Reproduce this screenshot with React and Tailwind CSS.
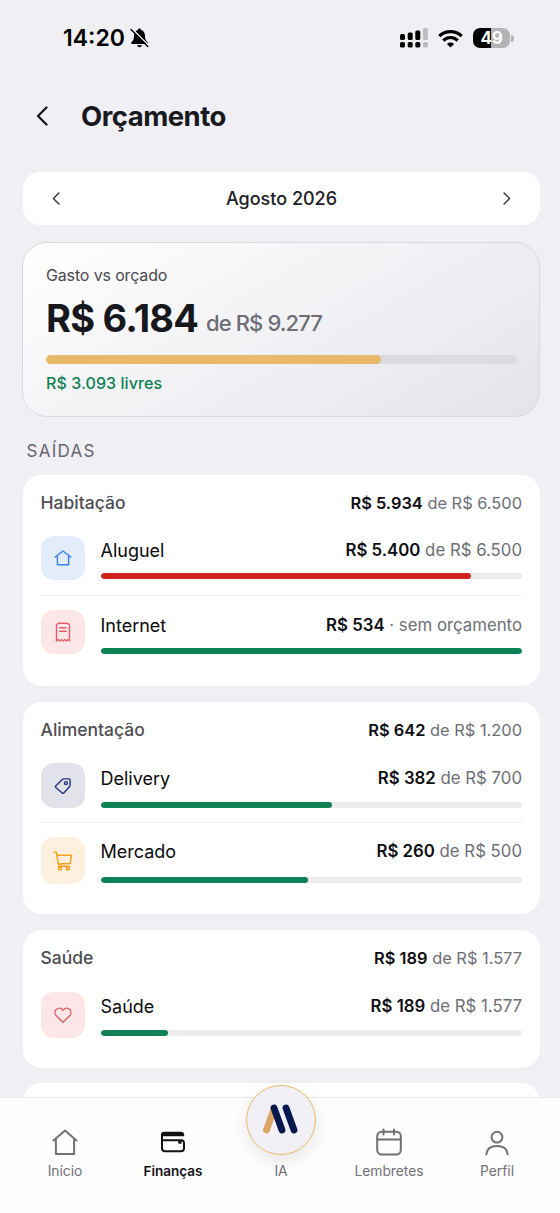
const INTER = "font-['Inter',sans-serif]";

const strokeProps = {
  fill: 'none',
  stroke: 'currentColor',
  strokeLinecap: 'round',
  strokeLinejoin: 'round',
};

function Chevron({ className, left, width = 2 }) {
  return (
    <svg viewBox="0 0 12 20" className={className} {...strokeProps} strokeWidth={width}>
      <path d={left ? 'M10.5 1.5 2 10l8.5 8.5' : 'M1.5 1.5 10 10l-8.5 8.5'} />
    </svg>
  );
}

function StatusBar() {
  return (
    <header className="flex h-[76px] shrink-0 items-center justify-between pl-[63px] pr-[46px]">
      <div className="flex items-center gap-[5px]">
        <span className="text-[23px] leading-7 font-semibold text-black">14:20</span>
        <svg viewBox="0 0 19 20" className="h-5 w-[19px]">
          <path d="M9.5 0.6c-.9 0-1.4.6-1.6 1.3C5.3 2.700 4 5 4 8c0 3.500-1.200 5-2.700 6.500-.6.700-.2 1.500.7 1.500h15c.9 0 1.300-.8.700-1.500C16.200 13 15 11.500 15 8c0-3-1.300-5.300-3.900-6.100C10.900 1.200 10.400.6 9.500.6z" fill="#000" />
          <path d="M7 17.300h5c-.3 1.200-1.300 1.900-2.500 1.900S7.300 18.500 7 17.300z" fill="#000" />
          <path d="M2.100.8 18.500 17.300" stroke="#f0eff4" strokeWidth="1.600" />
          <path d="M1 1.500 17.800 18.500" stroke="#000" strokeWidth="1.400" strokeLinecap="round" />
        </svg>
      </div>
      <div className="flex items-center">
        <svg viewBox="0 0 28 20" className="h-5 w-7">
          <g fill="#000">
            <rect x="0" y="6" width="5" height="6" rx="1.600" />
            <rect x="7.700" y="4.500" width="5" height="7.500" rx="1.600" />
            <rect x="15.300" y="2.500" width="5" height="9.500" rx="1.600" />
            <rect x="0" y="14" width="5" height="5.600" rx="1.600" />
            <rect x="7.700" y="14" width="5" height="5.600" rx="1.600" />
            <rect x="15.300" y="14" width="5" height="5.600" rx="1.600" />
          </g>
          <g fill="#bcbcc0">
            <rect x="22.900" y="0" width="5" height="12" rx="1.600" />
            <rect x="22.900" y="14" width="5" height="5.600" rx="1.600" />
          </g>
        </svg>
        <svg viewBox="0 0 25 19" className="ml-[10px] h-[19px] w-[25px]" fill="none" stroke="#000" strokeWidth="3.200">
          <path d="M1.300 7.200a16 16 0 0 1 22.400 0" />
          <path d="M5.300 11.500a10.200 10.200 0 0 1 14.400 0" />
          <path d="M12.500 18.400 8.900 15a5.200 5.200 0 0 1 7.200 0z" fill="#000" stroke="none" />
        </svg>
        <div className="ml-[10px] flex h-5 w-[37px] items-center justify-center rounded-[7px] bg-[linear-gradient(90deg,#000_49%,#b4b4b6_49%)]">
          <span className="text-[17px] leading-5 font-bold tracking-[-0.3px] text-white">49</span>
        </div>
        <div className="ml-[1px] h-[7px] w-[3px] rounded-r-[3px] bg-[#b4b4b6]" />
      </div>
    </header>
  );
}

const categoryIcons = {
  home: (
    <svg viewBox="0 0 18 18" className="size-[18px]" {...strokeProps} strokeWidth="1.450">
      <path d="M1.200 8 9 2l7.800 6M3.400 6.600V15.800h11.200V6.600" />
    </svg>
  ),
  receipt: (
    <svg viewBox="0 0 18 20" className="h-5 w-[18px]" {...strokeProps} strokeWidth="1.400">
      <path d="M2.500 18.900V4A2.800 2.800 0 0 1 5.300 1.200h7.400A2.800 2.800 0 0 1 15.500 4v14.900l-1.600-1.500-1.600 1.500-1.650-1.500L9 18.900l-1.650-1.500-1.650 1.500-1.600-1.500z" />
      <path d="M5.700 5.800h6.600M5.700 9.200h6.600" />
    </svg>
  ),
  tag: (
    <svg viewBox="0 0 18 18" className="size-[18px]" {...strokeProps} strokeWidth="1.400">
      <path d="M1.500 9.300 8.300 2.600q.7-.7 1.600-.7h5.200q1 0 1 1v5.200q0 .9-.7 1.600L9.800 16q-.8.700-1.600 0L1.500 10.200q-.4-.5 0-.9z" />
      <circle cx="12" cy="6.100" r="1.500" />
    </svg>
  ),
  cart: (
    <svg viewBox="0 0 20 20" className="size-5" {...strokeProps} strokeWidth="1.500">
      <path d="M1 1.300h2.400l2.400 14h10.400M4 4.300h14.600l-1.500 8.200-11.600.6" />
      <circle cx="7" cy="17.500" r="1.600" />
      <circle cx="14.800" cy="17.500" r="1.600" />
    </svg>
  ),
  heart: (
    <svg viewBox="0 0 18 18" className="size-[18px]" {...strokeProps} strokeWidth="1.400">
      <path d="M9 16.200 2.500 9.900C.7 8.100.6 5.200 2.200 3.500 4 1.600 7.300 1.600 9 4.300c1.700-2.700 5-2.700 6.800-.8 1.600 1.700 1.500 4.600-.3 6.400z" />
    </svg>
  ),
};

function Amount({ spent, rest, className }) {
  return (
    <span className={`${className} whitespace-nowrap text-[#6e6e75]`}>
      <span className="font-semibold text-[#0d0d12]">{spent}</span> {rest}
    </span>
  );
}

function Item({ item }) {
  return (
    <div className={`flex ${item.box}`}>
      <div className={`flex w-[44px] shrink-0 items-center justify-center rounded-[13px] ${item.tile}`}>
        {categoryIcons[item.icon]}
      </div>
      <div className="ml-[16px] flex min-w-0 flex-1 flex-col">
        <div className={`flex h-6 items-start justify-between ${item.line}`}>
          <span className="text-[18px] leading-6 text-[#0a0a0c]">{item.name}</span>
          <Amount spent={item.spent} rest={item.rest} className="-mt-px text-[16.800px] leading-6" />
        </div>
        <div className="h-[6px] w-full overflow-hidden rounded-full bg-[#ececed]">
          <div className={`h-full rounded-full ${item.bar}`} style={{ width: `${item.percent}%` }} />
        </div>
      </div>
    </div>
  );
}

const groups = [
  {
    name: 'Habitação', spent: 'R$ 5.934', rest: 'de R$ 6.500', height: 'h-[211px]', head: 'h-[61px] pt-[16px]',
    items: [
      { name: 'Aluguel', spent: 'R$ 5.400', rest: 'de R$ 6.500', icon: 'home', percent: 87.9, bar: 'bg-[#d0231c]', tile: 'h-[44px] bg-[#e2ecfb] text-[#3b82e8]', box: 'h-[59px]', line: 'mt-[3px] mb-[10px]' },
      { name: 'Internet', spent: 'R$ 534', rest: '· sem orçamento', icon: 'receipt', percent: 100, bar: 'bg-[#0a8255]', tile: 'h-[44px] bg-[#fde6e7] text-[#e5606b]', box: 'h-[60px] mt-[14px]', line: 'mt-[4px] mb-[10px]' },
    ],
  },
  {
    name: 'Alimentação', spent: 'R$ 642', rest: 'de R$ 1.200', height: 'h-[212px]', head: 'h-[61px] pt-[16px]',
    items: [
      { name: 'Delivery', spent: 'R$ 382', rest: 'de R$ 700', icon: 'tag', percent: 55, bar: 'bg-[#0f8256]', tile: 'h-[45px] bg-[#e1e2ea] text-[#26347f]', box: 'h-[59px]', line: 'mt-[4px] mb-[11px]' },
      { name: 'Mercado', spent: 'R$ 260', rest: 'de R$ 500', icon: 'cart', percent: 49.200, bar: 'bg-[#0f8256]', tile: 'h-[47px] bg-[#fef0de] text-[#f5a11c]', box: 'h-[60px] mt-[14px]', line: 'mt-[3px] mb-[13px]' },
    ],
  },
  {
    name: 'Saúde', spent: 'R$ 189', rest: 'de R$ 1.577', height: 'h-[138px]', head: 'h-[62px] pt-[16px]',
    items: [
      { name: 'Saúde', spent: 'R$ 189', rest: 'de R$ 1.577', icon: 'heart', percent: 15.900, bar: 'bg-[#0f8256]', tile: 'h-[46px] bg-[#fde6e7] text-[#e25f66]', box: 'h-[60px]', line: 'mt-[3px] mb-[11px]' },
    ],
  },
];

function Group({ group }) {
  return (
    <section className={`shrink-0 rounded-[19px] bg-white px-[18px] ${group.height}`}>
      <div className={`flex items-start justify-between ${group.head}`}>
        <h2 className="text-[17.500px] leading-6 font-medium text-[#4d4d54]">{group.name}</h2>
        <Amount spent={group.spent} rest={group.rest} className="text-[16.400px] leading-6" />
      </div>
      {group.items.map((item, i) => (
        <div key={item.name} className={i > 0 ? 'border-t border-[#ededef]' : ''}>
          <Item item={item} />
        </div>
      ))}
    </section>
  );
}

function NavItem({ label, children, active }) {
  return (
    <div className={`flex w-[108px] flex-col items-center ${active ? 'text-[#111116]' : 'text-[#707077]'}`}>
      <div className="flex h-[34px] items-end justify-center">{children}</div>
      <span className={`mt-[7px] leading-4 ${active ? 'text-[13.500px] font-semibold' : 'text-[13.800px]'}`}>{label}</span>
    </div>
  );
}

function BottomNav() {
  return (
    <nav className="relative flex h-[116px] shrink-0 justify-center border-t border-[#e9e9ec] bg-[#fefefe] pt-[24px] pl-[2px]">
      <NavItem label="Início">
        <svg viewBox="0 0 26 28" className="h-7 w-[26px]" {...strokeProps} strokeWidth="2">
          <path d="M1.500 12.500 13 2.500l11.500 10M3.900 10.500v15.500h18.200V10.500" />
        </svg>
      </NavItem>
      <NavItem label="Finanças" active>
        <svg viewBox="0 0 26 28" className="h-7 w-[26px]" {...strokeProps} strokeWidth="2">
          <path d="M1 8.300V7q0-3.200 3.200-3.200h16.600q3.200 0 3.400 3.200v1.300z" fill="currentColor" stroke="none" />
          <path d="M2 7v13.200q0 3 3 3h16q3 0 3-3v-5q0-3-3-3H2" />
          <path d="M18.200 13h3.300v2.800h-2.300q-1 0-1-1z" fill="currentColor" stroke="none" />
        </svg>
      </NavItem>
      <NavItem label="IA" />
      <NavItem label="Lembretes">
        <svg viewBox="0 0 26 28" className="h-7 w-[26px]" {...strokeProps} strokeWidth="2">
          <rect x="1.200" y="3.700" width="23.600" height="22.800" rx="4.500" />
          <path d="M1.500 11.500h23M7.500 1.500v5M18 1.500v5" />
        </svg>
      </NavItem>
      <NavItem label="Perfil">
        <svg viewBox="0 0 26 28" className="h-7 w-[26px]" {...strokeProps} strokeWidth="2">
          <circle cx="13" cy="9.200" r="5.400" />
          <path d="M2.300 26.300c.6-5.400 4.900-8.300 10.700-8.300s10.100 2.900 10.700 8.300" />
        </svg>
      </NavItem>
      <div className="absolute top-[-13px] left-[246px] flex size-[70px] items-center justify-center rounded-full border-[1.500px] border-[#ecb96b] bg-[#f1f0f6] shadow-[0_6px_18px_rgba(0,0,0,0.1)]">
        <svg viewBox="0 0 38 32" className="mt-[-2px] h-8 w-[38px]" fill="none" strokeLinecap="round" strokeWidth="6.800">
          <path d="M4.500 27 11.500 7.500" stroke="#daa565" />
          <path d="M12 5 20 27M24 5 32 27" stroke="#05194f" />
        </svg>
      </div>
    </nav>
  );
}

export default function App() {
  return (
    <div className={`flex h-[1213px] w-[560px] flex-col overflow-hidden bg-[#f0eff4] ${INTER}`}>
      <StatusBar />
      <div className="flex h-[96px] shrink-0 items-start pt-[22px] pl-[36px]">
        <Chevron left width={2.300} className="mt-[8px] h-[20px] w-3 text-[#15151b]" />
        <h1 className="ml-[33px] text-[27.500px] leading-9 font-bold tracking-[-0.500px] text-[#18181f]">Orçamento</h1>
      </div>
      <main className="flex min-h-0 flex-1 flex-col overflow-hidden pr-[20px] pl-[22.500px]">
        <div className="flex h-[53px] shrink-0 items-center justify-between rounded-[17px] bg-white pr-[29px] pl-[29.500px]">
          <Chevron left width={2.200} className="h-[13px] w-2 text-[#33333a]" />
          <span className="text-[18px] leading-6 font-medium text-[#202027]">Agosto 2026</span>
          <Chevron width={2.200} className="h-[13px] w-2 text-[#33333a]" />
        </div>
        <section className="mt-[17px] -ml-[0.500px] h-[175px] shrink-0 rounded-[25px] border border-[#d9d9de] bg-[linear-gradient(150deg,#ffffff_0%,#f3f3f6_45%,#e4e3ea_100%)] pr-[22px] pl-[23px] pt-[20px]">
          <p className="text-[16px] leading-6 tracking-[-0.150px] text-[#4b4b52]">Gasto vs orçado</p>
          <div className="mt-[7px] flex h-[48px] items-baseline whitespace-nowrap">
            <span className="text-[38px] leading-[48px] font-bold tracking-[-0.800px] text-[#17171e]">R$ 6.184</span>
            <span className="relative top-[-1px] ml-[8px] text-[22px] font-medium tracking-[-0.900px] text-[#6d6d74]">de R$ 9.277</span>
          </div>
          <div className="mt-[13px] h-[9px] overflow-hidden rounded-full bg-[#dcdbe1]">
            <div className="h-full w-[71.100%] rounded-full bg-[#e8b969]" />
          </div>
          <p className="mt-[7px] text-[16px] leading-6 font-medium tracking-[0.080px] text-[#0d8054]">R$ 3.093 livres</p>
        </section>
        <h3 className="mt-[22px] ml-[4px] h-[36px] shrink-0 text-[17px] leading-6 tracking-[1.300px] text-[#66666d]">SAÍDAS</h3>
        <div className="flex flex-col gap-[16px]">
          {groups.map((g) => (
            <Group key={g.name} group={g} />
          ))}
          <div className="-mt-px h-[60px] shrink-0 rounded-[19px] bg-white" />
        </div>
      </main>
      <BottomNav />
    </div>
  );
}
